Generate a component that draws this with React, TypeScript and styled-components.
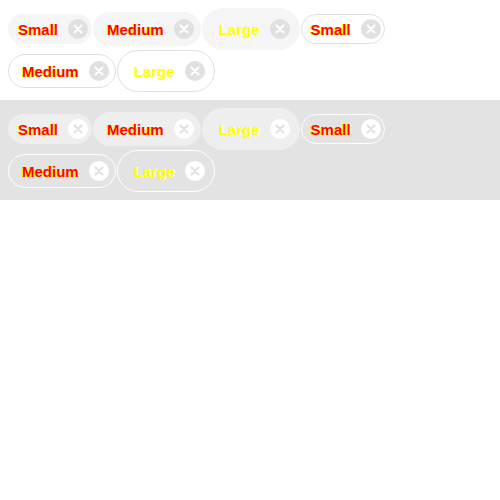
import React from 'react'
import styled, { createGlobalStyle, css } from 'styled-components'

const Global = createGlobalStyle`
  html, body {
    margin: 0;
    padding: 0;
    background: #fff;
    font-family: 'Liberation Sans', Arial, sans-serif;
  }
`

type Size = 'small' | 'medium' | 'large'

// padding already net of the 1px border
const sizes = {
  small: { h: 30, pl: 9, pr: 3 },
  medium: { h: 34, pl: 13, pr: 6 },
  large: { h: 42, pl: 16, pr: 9 }
}

const Section = styled.div<{ $dark?: boolean }>`
  display: flex;
  flex-wrap: wrap;
  align-items: center;
  align-content: flex-start;
  gap: 0 1px;
  height: 100px;
  box-sizing: border-box;
  padding: 8px;
  background: ${p => (p.$dark ? '#e3e3e3' : '#fff')};
`

const Chip = styled.div<{ $size: Size; $outlined?: boolean; $dark?: boolean }>`
  display: inline-flex;
  align-items: center;
  box-sizing: border-box;
  height: ${p => sizes[p.$size].h}px;
  padding: 0 ${p => sizes[p.$size].pr}px 0 ${p => sizes[p.$size].pl}px;
  border-radius: ${p => sizes[p.$size].h / 2}px;
  gap: 10px;
  ${p =>
    p.$outlined
      ? css`
          border: 1px solid ${p.$dark ? '#fff' : '#e0e0e0'};
          background: transparent;
        `
      : css`
          border: 1px solid transparent;
          background: ${p.$dark ? '#eeeeee' : '#f5f5f5'};
        `}
`

const Label = styled.span<{ $size: Size }>`
  font-size: 15px;
  font-weight: bold;
  line-height: 1;
  ${p =>
    p.$size === 'large'
      ? css`
          color: #ff0;
          text-shadow: 1px 0 #fff;
        `
      : p.$size === 'medium'
        ? css`
            color: #f00;
            text-shadow: -1px 0 #ff0;
          `
        : css`
            color: #f00;
            text-shadow: -1px 0 #ff0, 1px 0 #fff;
          `}
`

const Close = styled.span<{ $dark?: boolean }>`
  display: inline-flex;
  align-items: center;
  justify-content: center;
  width: 20px;
  height: 20px;
  border-radius: 50%;
  background: ${p => (p.$dark ? '#fff' : '#e0e0e0')};
  color: ${p => (p.$dark ? '#e0e0e0' : '#fff')};
`

function CloseIcon() {
  return (
    <svg width="10" height="10" viewBox="0 0 10 10">
      <path
        d="M1.5 1.5 L8.5 8.5 M8.5 1.5 L1.5 8.5"
        stroke="currentColor"
        strokeWidth="2"
        strokeLinecap="round"
      />
    </svg>
  )
}

const chips: { label: string; size: Size; outlined?: boolean }[] = [
  { label: 'Small', size: 'small' },
  { label: 'Medium', size: 'medium' },
  { label: 'Large', size: 'large' },
  { label: 'Small', size: 'small', outlined: true },
  { label: 'Medium', size: 'medium', outlined: true },
  { label: 'Large', size: 'large', outlined: true }
]

function ChipRow({ dark }: { dark?: boolean }) {
  return (
    <Section $dark={dark}>
      {chips.map((c, i) => (
        <Chip key={i} $size={c.size} $outlined={c.outlined} $dark={dark}>
          <Label $size={c.size}>{c.label}</Label>
          <Close $dark={dark}>
            <CloseIcon />
          </Close>
        </Chip>
      ))}
    </Section>
  )
}

export default function App() {
  return (
    <>
      <Global />
      <ChipRow />
      <ChipRow dark />
    </>
  )
}
